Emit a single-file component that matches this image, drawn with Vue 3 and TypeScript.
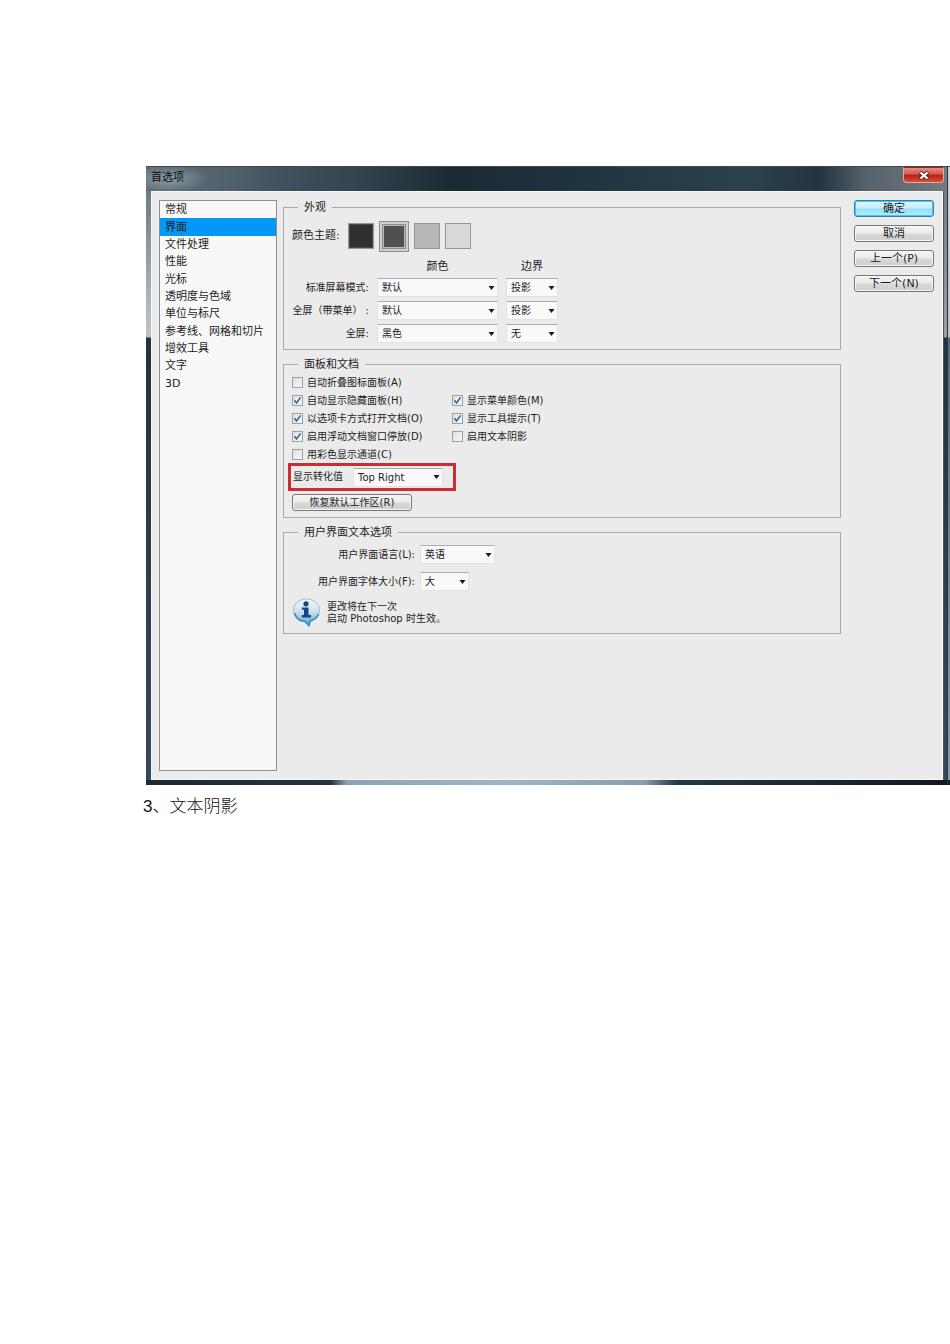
<script setup lang="ts">
import { ref } from 'vue'

const sections = ['常规', '界面', '文件处理', '性能', '光标', '透明度与色域', '单位与标尺', '参考线、网格和切片', '增效工具', '文字', '3D']
const active = ref(1)

const themes = [
  { name: '深色', tone: 'darkest' },
  { name: '中灰', tone: 'dark' },
  { name: '浅灰', tone: 'light' },
  { name: '亮色', tone: 'lightest' },
]
const theme = ref(1)

interface ScreenMode { id: string; label: string; color: string; border: string }
const modes = ref<ScreenMode[]>([
  { id: 'standard', label: '标准屏幕模式:', color: '默认', border: '投影' },
  { id: 'menu', label: '全屏（带菜单） :', color: '默认', border: '投影' },
  { id: 'full', label: '全屏:', color: '黑色', border: '无' },
])
const colors = ['默认', '黑色']
const borders = ['投影', '无']

interface Option { label: string; on: boolean; column: 'first' | 'second' }
const options = ref<Option[]>([
  { label: '自动折叠图标面板(A)', on: false, column: 'first' },
  { label: '自动显示隐藏面板(H)', on: true, column: 'first' },
  { label: '显示菜单颜色(M)', on: true, column: 'second' },
  { label: '以选项卡方式打开文档(O)', on: true, column: 'first' },
  { label: '显示工具提示(T)', on: true, column: 'second' },
  { label: '启用浮动文档窗口停放(D)', on: true, column: 'first' },
  { label: '启用文本阴影', on: false, column: 'second' },
  { label: '用彩色显示通道(C)', on: false, column: 'first' },
])

const transform = ref('Top Right')
const language = ref('英语')
const fontSize = ref('大')
</script>

<template>
  <main class="page">
    <section class="window" aria-labelledby="window-title">
      <header class="titlebar">
        <h1 id="window-title">首选项</h1>
        <button class="close" type="button" aria-label="关闭">
          <svg width="12" height="9" viewBox="0 0 12 9" aria-hidden="true">
            <path d="M2 1.2 L10 7.8 M10 1.2 L2 7.8" stroke="#5e2626" stroke-width="4" />
            <path d="M2.5 1.5 L9.5 7.5 M9.5 1.5 L2.5 7.5" stroke="#fff" stroke-width="2.2" />
          </svg>
        </button>
      </header>

      <div class="body">
        <nav class="sidebar">
          <ul>
            <li v-for="(name, i) in sections" :key="name">
              <button type="button" :class="{ active: i === active }" @click="active = i">{{ name }}</button>
            </li>
          </ul>
        </nav>

        <form class="settings" @submit.prevent>
          <fieldset>
            <legend>外观</legend>
            <div class="themes">
              <span class="themes-label">颜色主题:</span>
              <button
                v-for="(t, i) in themes"
                :key="t.tone"
                type="button"
                :class="['swatch', t.tone, { chosen: i === theme }]"
                :aria-label="t.name"
                @click="theme = i"
              ></button>
            </div>
            <div class="modes">
              <span></span>
              <span class="head">颜色</span>
              <span class="head">边界</span>
              <template v-for="m in modes" :key="m.id">
                <label class="right" :for="m.id">{{ m.label }}</label>
                <span class="select">
                  <select :id="m.id" v-model="m.color">
                    <option v-for="c in colors" :key="c">{{ c }}</option>
                  </select>
                  <svg width="7" height="4" viewBox="0 0 7 4" aria-hidden="true"><path d="M0.5 0 H6.5 L3.5 4 Z" /></svg>
                </span>
                <span class="select">
                  <select v-model="m.border" aria-label="边界">
                    <option v-for="b in borders" :key="b">{{ b }}</option>
                  </select>
                  <svg width="7" height="4" viewBox="0 0 7 4" aria-hidden="true"><path d="M0.5 0 H6.5 L3.5 4 Z" /></svg>
                </span>
              </template>
            </div>
          </fieldset>

          <fieldset>
            <legend>面板和文档</legend>
            <div class="options">
              <label v-for="o in options" :key="o.label" :class="['option', o.column]">
                <span class="box">
                  <input v-model="o.on" type="checkbox" />
                  <svg v-if="o.on" width="9" height="9" viewBox="0 0 9 9" aria-hidden="true">
                    <path d="M1.4 4.2 L3.6 7 L7.6 1.4" fill="none" stroke="#32608a" stroke-width="1.5" />
                  </svg>
                </span>
                <span class="option-text">{{ o.label }}</span>
              </label>
            </div>
            <div class="highlight">
              <label for="transform">显示转化值</label>
              <span class="select transform">
                <select id="transform" v-model="transform">
                  <option>Top Right</option>
                </select>
                <svg width="7" height="4" viewBox="0 0 7 4" aria-hidden="true"><path d="M0.5 0 H6.5 L3.5 4 Z" /></svg>
              </span>
            </div>
            <button class="push reset" type="button">恢复默认工作区(R)</button>
          </fieldset>

          <fieldset>
            <legend>用户界面文本选项</legend>
            <div class="text-options">
              <label class="right" for="language">用户界面语言(L):</label>
              <span class="select language">
                <select id="language" v-model="language">
                  <option>英语</option>
                </select>
                <svg width="7" height="4" viewBox="0 0 7 4" aria-hidden="true"><path d="M0.5 0 H6.5 L3.5 4 Z" /></svg>
              </span>
              <label class="right" for="font-size">用户界面字体大小(F):</label>
              <span class="select font-size">
                <select id="font-size" v-model="fontSize">
                  <option>大</option>
                </select>
                <svg width="7" height="4" viewBox="0 0 7 4" aria-hidden="true"><path d="M0.5 0 H6.5 L3.5 4 Z" /></svg>
              </span>
            </div>
            <div class="note">
              <svg width="29" height="29" viewBox="0 0 29 29" aria-hidden="true">
                <defs>
                  <linearGradient id="bubble" x1="0" y1="0" x2="0" y2="1">
                    <stop offset="0" stop-color="#f4f8fa" />
                    <stop offset="0.5" stop-color="#c9deea" />
                    <stop offset="1" stop-color="#4e9fd4" />
                  </linearGradient>
                </defs>
                <path d="M14.5 1 C22 1 27.5 6 27.5 12.5 C27.5 18 23.5 22 18.5 23.3 L17 28 L12 23.5 C5.5 22.5 1.5 18 1.5 12.5 C1.5 6 7 1 14.5 1 Z" fill="url(#bubble)" stroke="#a9bcc8" />
                <path d="M2.5 15 C5 23 11 23.5 13 23.2 L17 27.5 L18 23 C22 22 25 20 26.5 16" fill="none" stroke="#3d87b8" stroke-width="1.5" />
                <circle cx="14" cy="5.8" r="2.6" fill="#14458c" />
                <path d="M10 9.5 H16.5 V17 H19 V19.5 H9.8 V17 H12 V11.8 H10 Z" fill="#14458c" />
              </svg>
              <p>更改将在下一次<br />启动 Photoshop 时生效。</p>
            </div>
          </fieldset>
        </form>

        <div class="actions">
          <button class="push primary" type="button">确定</button>
          <button class="push" type="button">取消</button>
          <button class="push" type="button">上一个(P)</button>
          <button class="push" type="button">下一个(N)</button>
        </div>
      </div>
    </section>
    <p class="caption">3、文本阴影</p>
  </main>
</template>

<style>
body {
  margin: 0;
  background: #fff;
}
</style>

<style scoped>
* {
  box-sizing: border-box;
}
.page {
  padding: 166px 0 40px 146px;
  font-family: "DejaVu Sans", "Noto Sans CJK SC", sans-serif;
  font-size: 10px;
  line-height: 14px;
  color: #1c1c1c;
}
button,
select,
input {
  margin: 0;
  padding: 0;
  font: inherit;
  color: inherit;
}
.window {
  padding: 0 7px 5px 5px;
  border-top: 1px solid #3d4a52;
  background:
    linear-gradient(#c9d0d6, #b9bfc4 170px, #56687a 171px, #8a9cac) right top / 2px calc(100% - 5px) no-repeat,
    linear-gradient(#2b3840, #2b3840) right 2px top / 1px 100% no-repeat,
    linear-gradient(90deg, #1c2931, #26343d 23%, #8fa3b6 25%, #a3b3c2 45%, #899dad 62%, #263743 66%, #10191f) bottom / 100% 5px no-repeat,
    linear-gradient(#4b565d, #4b565d) right 6px top / 1px 100% no-repeat,
    linear-gradient(#6d7980, #858e93 100px, #9a9fa2 170px, #23333f 171px, #34495a 100%) right top / 7px 100% no-repeat,
    linear-gradient(#5d6b74, #76838b 40px, #a9b4bb 130px, #bcc4c8 170px, #23333f 171px, #34495a 100%);
}
.titlebar {
  display: flex;
  justify-content: space-between;
  align-items: flex-start;
  height: 24px;
  margin: 0 -4px 0 -5px;
  padding-left: 5px;
  background:
    radial-gradient(ellipse 40px 14px at 22px 12px, rgba(150, 165, 175, 0.85), rgba(150, 165, 175, 0)),
    linear-gradient(90deg, #5c6c75, #53646e 9%, #3d505b 18%, #33464f 26%, #1a2a33 38%, #203440 55%, #2c414e 75%, #22343f 84%, #55636c 90%, #74797d 100%);
}
h1 {
  margin: 3px 0 0;
  font-size: 11px;
  line-height: 16px;
  font-weight: 400;
  color: #0c0c0c;
}
.close {
  display: flex;
  justify-content: center;
  align-items: center;
  width: 41px;
  height: 16px;
  margin-right: 3px;
  border: 1px solid #e8a9a3;
  border-top-color: #8d2a23;
  border-radius: 0 0 4px 4px;
  background: linear-gradient(#e58d80, #d4554a 45%, #b41c13 50%, #d5503f);
}
.body {
  display: grid;
  grid-template-columns: 118px minmax(0, 1fr) 80px;
  padding: 9px 9px 9px 8px;
  background: #ebebeb;
  box-shadow: inset 0 0 0 1px #f8f8f8;
}
.sidebar {
  min-height: 571px;
  border: 1px solid #8d9093;
  background: #f8f8f8;
}
.sidebar ul {
  display: grid;
  grid-auto-rows: 1fr;
  height: 191px;
  margin: 0;
  padding: 0;
  list-style: none;
}
.sidebar li {
  display: grid;
}
.sidebar button {
  border: 0;
  padding: 1px 0 0 5px;
  background: none;
  font-size: 11px;
  line-height: 16px;
  text-align: left;
  white-space: nowrap;
}
.sidebar button.active {
  background: #0398f7;
}
.settings {
  display: flex;
  flex-direction: column;
  gap: 7px;
  margin: 0 13px 0 6px;
}
fieldset {
  min-width: 0;
  margin: 0;
  padding: 0 8px 6px;
  border: 1px solid #a9a9a9;
}
legend {
  height: 14px;
  margin-left: 6px;
  padding: 0 6px;
  font-size: 11px;
  line-height: 16px;
}
.themes {
  display: flex;
  align-items: center;
  gap: 5px;
  height: 32px;
  margin: 6px 0 8px;
}
.themes-label {
  width: 51px;
  font-size: 11px;
}
.swatch {
  width: 26px;
  height: 26px;
  border: 1px solid #969696;
}
.swatch.darkest { background: #2f2f2f; box-shadow: inset 0 0 0 1px #4c4c4c; }
.swatch.dark { background: #505050; }
.swatch.light { background: #b8b8b8; }
.swatch.lightest { background: #d9d9d9; }
.swatch.chosen {
  width: 30px;
  height: 31px;
  border-color: #8c8c8c;
  box-shadow: inset 0 0 0 2px #d0d0d0, inset 0 0 0 3px #8c8c8c, inset 0 0 0 4px #b9b9b9;
}
.modes {
  display: grid;
  grid-template-columns: 77px 121px 52px;
  grid-template-rows: 14px;
  grid-auto-rows: 19px;
  gap: 4px 8px;
  align-items: center;
}
.head {
  font-size: 11px;
  text-align: center;
}
.right {
  text-align: right;
  white-space: nowrap;
}
.select {
  display: grid;
  align-items: center;
  height: 19px;
}
.select select,
.select svg {
  grid-area: 1 / 1;
}
.select select {
  width: 100%;
  height: 19px;
  padding: 1px 0 0 4px;
  border: 1px solid #e2e2e2;
  border-top-color: #adadad;
  border-radius: 0;
  background: #f9f9f9;
  appearance: none;
}
.select svg {
  justify-self: end;
  margin-right: 3px;
  fill: #1a1a1a;
  pointer-events: none;
}
.options {
  display: grid;
  grid-template-columns: 160px 1fr;
  grid-auto-rows: 18px;
  padding-top: 2px;
}
.option {
  display: flex;
  align-items: center;
  gap: 4px;
  white-space: nowrap;
}
.option-text {
  padding-top: 1px;
}
.first {
  grid-column: 1;
}
.second {
  grid-column: 2;
}
.box {
  display: grid;
  place-items: center;
}
.box input,
.box svg {
  grid-area: 1 / 1;
}
.box input {
  width: 11px;
  height: 11px;
  border: 1px solid #9a9fa3;
  background: linear-gradient(135deg, #dcdfe1, #f8f8f8);
  appearance: none;
}
.box svg {
  pointer-events: none;
}
.highlight {
  display: flex;
  align-items: center;
  gap: 10px;
  width: 168px;
  height: 28px;
  margin: 0 0 3px -4px;
  padding-left: 2px;
  border: 3px solid #c92f2f;
}
.transform {
  width: 90px;
}
.push {
  height: 17px;
  padding-top: 1px;
  border: 1px solid #777;
  border-radius: 3px;
  background: linear-gradient(#f4f4f4, #ebebeb 48%, #d8d8d8 52%, #cfcfcf);
  box-shadow: inset 0 0 0 1px #f7f7f7;
  line-height: 14px;
}
.reset {
  display: block;
  width: 120px;
}
.text-options {
  display: grid;
  grid-template-columns: 123px 1fr;
  gap: 8px 5px;
  align-items: center;
  padding-top: 6px;
}
.language {
  width: 75px;
}
.font-size {
  width: 49px;
}
.note {
  display: flex;
  align-items: center;
  gap: 6px;
  margin-top: 7px;
}
.note p {
  margin: 0;
  line-height: 12px;
}
.actions {
  display: flex;
  flex-direction: column;
  gap: 8px;
}
.actions .push {
  font-size: 11px;
}
.primary {
  border-color: #2d83ad;
  background: linear-gradient(#e2f5fc, #c5ebfa 48%, #9bdcf5 52%, #b4ecfb);
  box-shadow: inset 0 0 0 1px #45c8f2;
}
.caption {
  margin: 10px 0 0 -3px;
  font-family: "Liberation Sans", "Noto Sans CJK SC", sans-serif;
  font-size: 17px;
  line-height: 24px;
  font-weight: 300;
  color: #111;
}
</style>
